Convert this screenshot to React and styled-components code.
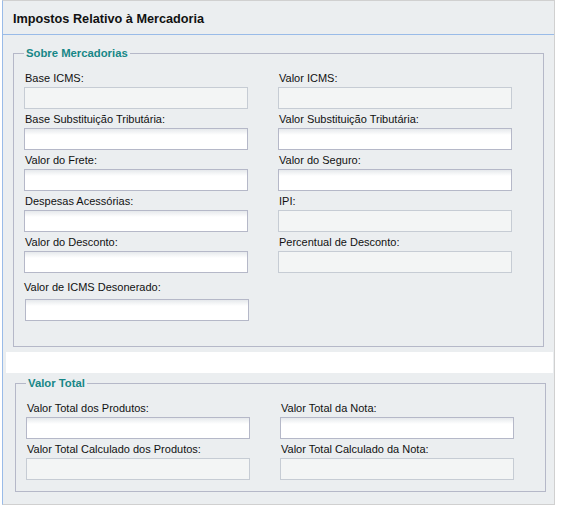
import React from 'react'
import styled, { createGlobalStyle } from 'styled-components'

const GlobalStyle = createGlobalStyle`
body {
    margin: 0;
    background: #fff;
    font-family: "Liberation Sans", Arial, sans-serif;
}
`

const Panel = styled.div`
margin-left: 2px;
width: 553px;
box-sizing: border-box;
border: 1px solid #d0d0d0;
border-left-color: #99bbe8;
background: #ebeef0;
`

const Header = styled.div`
height: 34px;
box-sizing: border-box;
padding: 2px 0 0 10px;
display: flex;
align-items: center;
border-bottom: 1px solid #99bbe8;
font-size: 12.7px;
font-weight: bold;
color: #111;
`

const Section = styled.div`
padding: ${props => props.$pad};
`

const Spacer = styled.div`
height: 21px;
margin: 0 1px 0 3px;
background: #fff;
`

const Fieldset = styled.fieldset`
margin: 0;
min-width: 0;
border: 1px solid #b5b8c8;
padding: 8px 10px ${props => props.$bottom}px;
`

const Legend = styled.legend`
padding: 0 2px;
font-size: 11.3px;
font-weight: bold;
line-height: 14px;
color: #178787;
`

const Grid = styled.div`
display: grid;
grid-template-columns: 224px 234px;
column-gap: 30px;
`

const Label = styled.label`
display: block;
padding: ${props => props.$spaced ? '7px 0 4px 0' : '3px 0 1px 1px'};
line-height: 15px;
font-size: 11px;
color: #111;
white-space: nowrap;
`

const Input = styled.input`
display: block;
box-sizing: border-box;
width: ${props => props.$shift ? '224px' : '100%'};
height: 22px;
margin: 0 0 0 ${props => props.$shift ? '1px' : '0'};
padding: 0 3px;
border: 1px solid ${props => props.$locked ? '#c6ccd4' : '#b5b8c8'};
background: ${props => props.$locked ? '#f3f5f5' : 'linear-gradient(#e6e9ec, #fff 6px)'};
font: 11px "Liberation Sans", Arial, sans-serif;
outline: none;
`

const mercadorias = [
    { label: 'Base ICMS:', locked: true },
    { label: 'Valor ICMS:', locked: true },
    { label: 'Base Substituição Tributária:' },
    { label: 'Valor Substituição Tributária:' },
    { label: 'Valor do Frete:' },
    { label: 'Valor do Seguro:' },
    { label: 'Despesas Acessórias:' },
    { label: 'IPI:', locked: true },
    { label: 'Valor do Desconto:' },
    { label: 'Percentual de Desconto:', locked: true },
]

const totais = [
    { label: 'Valor Total dos Produtos:' },
    { label: 'Valor Total da Nota:' },
    { label: 'Valor Total Calculado dos Produtos:', locked: true },
    { label: 'Valor Total Calculado da Nota:', locked: true },
]

function Field({ label, locked, spaced }) {
    return (
        <div>
            <Label $spaced={spaced}>{label}</Label>
            <Input type='text' readOnly={locked} $locked={locked} $shift={spaced} />
        </div>
    )
}

function App() {
    return (
        <>
            <GlobalStyle />
            <Panel>
                <Header>Impostos Relativo à Mercadoria</Header>
                <Section $pad='11px 10px 5px 10px'>
                    <Fieldset $bottom={25}>
                        <Legend>Sobre Mercadorias</Legend>
                        <Grid>
                            {mercadorias.map(f => <Field key={f.label} {...f} />)}
                            <Field label='Valor de ICMS Desonerado:' spaced />
                        </Grid>
                    </Fieldset>
                </Section>
                <Spacer />
                <Section $pad='3px 8px 12px 12px'>
                    <Fieldset $bottom={11}>
                        <Legend>Valor Total</Legend>
                        <Grid>
                            {totais.map(f => <Field key={f.label} {...f} />)}
                        </Grid>
                    </Fieldset>
                </Section>
            </Panel>
        </>
    )
}

export default App
